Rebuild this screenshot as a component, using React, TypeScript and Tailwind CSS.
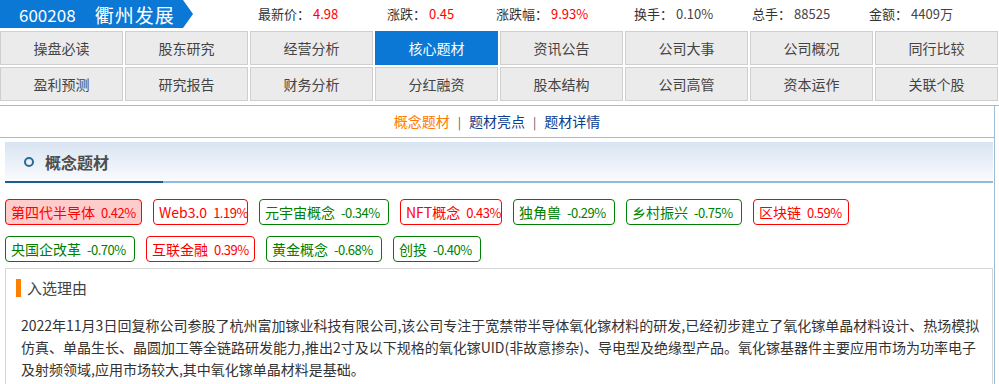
import React from "react";

const navRow1 = ["操盘必读", "股东研究", "经营分析", "核心题材", "资讯公告", "公司大事", "公司概况", "同行比较"];
const navRow2 = ["盈利预测", "研究报告", "财务分析", "分红融资", "股本结构", "公司高管", "资本运作", "关联个股"];

type Tag = { label: string; value: string; up: boolean; w: string; active?: boolean };

const tagsRow1: Tag[] = [
  { label: "第四代半导体", value: "0.42%", up: true, w: "w-[137px]", active: true },
  { label: "Web3.0", value: "1.19%", up: true, w: "w-[95px]" },
  { label: "元宇宙概念", value: "-0.34%", up: false, w: "w-[130px]" },
  { label: "NFT概念", value: "0.43%", up: true, w: "w-[102px]" },
  { label: "独角兽", value: "-0.29%", up: false, w: "w-[102px]" },
  { label: "乡村振兴", value: "-0.75%", up: false, w: "w-[116px]" },
  { label: "区块链", value: "0.59%", up: true, w: "w-[96px]" },
];
const tagsRow2: Tag[] = [
  { label: "央国企改革", value: "-0.70%", up: false, w: "w-[130px]" },
  { label: "互联金融", value: "0.39%", up: true, w: "w-[109px]" },
  { label: "黄金概念", value: "-0.68%", up: false, w: "w-[116px]" },
  { label: "创投", value: "-0.40%", up: false, w: "w-[88px]" },
];

function TagItem({ t }: { t: Tag }) {
  const color = t.up ? "text-[#ff0000] border-[#ff0000]" : "text-[#008000] border-[#008000]";
  const bg = t.active ? "bg-[#ffcccc]" : "bg-white";
  return (
    <div
      className={`${t.w} ${color} ${bg} h-[26px] shrink-0 border rounded-[4px] flex items-center pl-[5px] text-[14px] leading-none whitespace-nowrap`}
    >
      <span>{t.label}</span>
      <span className="ml-[6px] text-[13px] tracking-[-0.5px]">{t.value}</span>
    </div>
  );
}

function Stat({ label, value, red, w }: { label: string; value: string; red?: boolean; w: string }) {
  return (
    <div className={`${w} shrink-0 flex items-center text-[13px] text-[#333]`}>
      <span>{label}</span>
      <span className={`ml-[3px] ${red ? "text-[#ff0000]" : "text-[#444]"}`}>{value}</span>
    </div>
  );
}

export default function App() {
  return (
    <div className="w-[999px] h-[384px] overflow-hidden bg-white font-['Noto_Sans_CJK_SC','Noto_Sans',sans-serif]">
      {/* header */}
      <div className="h-[28px] flex items-center">
        <div className="w-[193px] h-[28px] shrink-0 bg-[#0a78d4] text-white flex items-center [clip-path:polygon(0_0,183px_0,193px_50%,183px_100%,0_100%)]">
          <span className="ml-[19px] text-[17px] leading-none">600208</span>
          <span className="ml-[19px] text-[19px] leading-none tracking-[1px]">衢州发展</span>
        </div>
        <div className="ml-[65px] flex items-center">
          <Stat label="最新价：" value="4.98" red w="w-[129px]" />
          <Stat label="涨跌：" value="0.45" red w="w-[109px]" />
          <Stat label="涨跌幅：" value="9.93%" red w="w-[138px]" />
          <Stat label="换手：" value="0.10%" w="w-[118px]" />
          <Stat label="总手：" value="88525" w="w-[117px]" />
          <Stat label="金额：" value="4409万" w="w-[120px]" />
        </div>
      </div>

      {/* nav grid */}
      <div className="mt-[3px] grid grid-cols-[repeat(8,123px)] gap-x-[2px] gap-y-[2px]">
        {[...navRow1, ...navRow2].map((n) => {
          const active = n === "核心题材";
          return (
            <div
              key={n}
              className={`h-[34px] flex items-center justify-center text-[14px] ${
                active
                  ? "bg-[#0a78d4] text-white border border-[#0a78d4]"
                  : "bg-[#ebebeb] text-[#444] border border-[#cfcfcf]"
              }`}
            >
              {n}
            </div>
          );
        })}
      </div>

      {/* content frame */}
      <div className="mt-[4px] border-t border-[#9dbcd6]">
        <div className="w-[995px] border-r border-[#9dbcd6] h-[300px]">
          <div className="h-[32px] border-b border-[#9dbcd6] flex items-center justify-center text-[14px]">
            <span className="text-[#ff7a00]">概念题材</span>
            <span className="mx-[8px] text-[#555] text-[12px]">|</span>
            <span className="text-[#0c3d8f]">题材亮点</span>
            <span className="mx-[8px] text-[#555] text-[12px]">|</span>
            <span className="text-[#0c3d8f]">题材详情</span>
          </div>

          <div className="pl-[5px] pr-[1px]">
            {/* section header */}
            <div className="mt-[4px] h-[41px] bg-gradient-to-b from-[#d9e4f2] to-[#fbfcfe] flex flex-col">
              <div className="flex-1 flex items-center">
                <div className="ml-[19px] w-[10px] h-[10px] rounded-full border-2 border-[#2b6a96]" />
                <span className="ml-[11px] text-[16px] font-bold text-[#4d4d4d]">概念题材</span>
              </div>
              <div className="h-[2px] flex">
                <div className="w-[158px] bg-[#1a5f8c]" />
                <div className="flex-1 bg-[#8fbcd9]" />
              </div>
            </div>

            {/* tags */}
            <div className="mt-[16px] flex gap-x-[11px]">
              {tagsRow1.map((t) => (
                <TagItem key={t.label} t={t} />
              ))}
            </div>
            <div className="mt-[11px] flex gap-x-[11px]">
              {tagsRow2.map((t) => (
                <TagItem key={t.label} t={t} />
              ))}
            </div>

            {/* reason box */}
            <div className="mt-[6px] w-[988px] h-[130px] border border-[#d6d6d6] pt-[10px]">
              <div className="pl-[10px] flex items-center h-[18px]">
                <div className="w-[5px] h-[18px] bg-[#ff8000]" />
                <span className="ml-[6px] text-[15px] text-[#444]">入选理由</span>
              </div>
              <div className="mt-[17px] pl-[15px] text-[14px] leading-[22px] text-[#333] whitespace-nowrap">
                <div>2022年11月3日回复称公司参股了杭州富加镓业科技有限公司,该公司专注于宽禁带半导体氧化镓材料的研发,已经初步建立了氧化镓单晶材料设计、热场模拟</div>
                <div>仿真、单晶生长、晶圆加工等全链路研发能力,推出2寸及以下规格的氧化镓UID(非故意掺杂)、导电型及绝缘型产品。氧化镓基器件主要应用市场为功率电子</div>
                <div>及射频领域,应用市场较大,其中氧化镓单晶材料是基础。</div>
              </div>
            </div>
          </div>
        </div>
      </div>
    </div>
  );
}
